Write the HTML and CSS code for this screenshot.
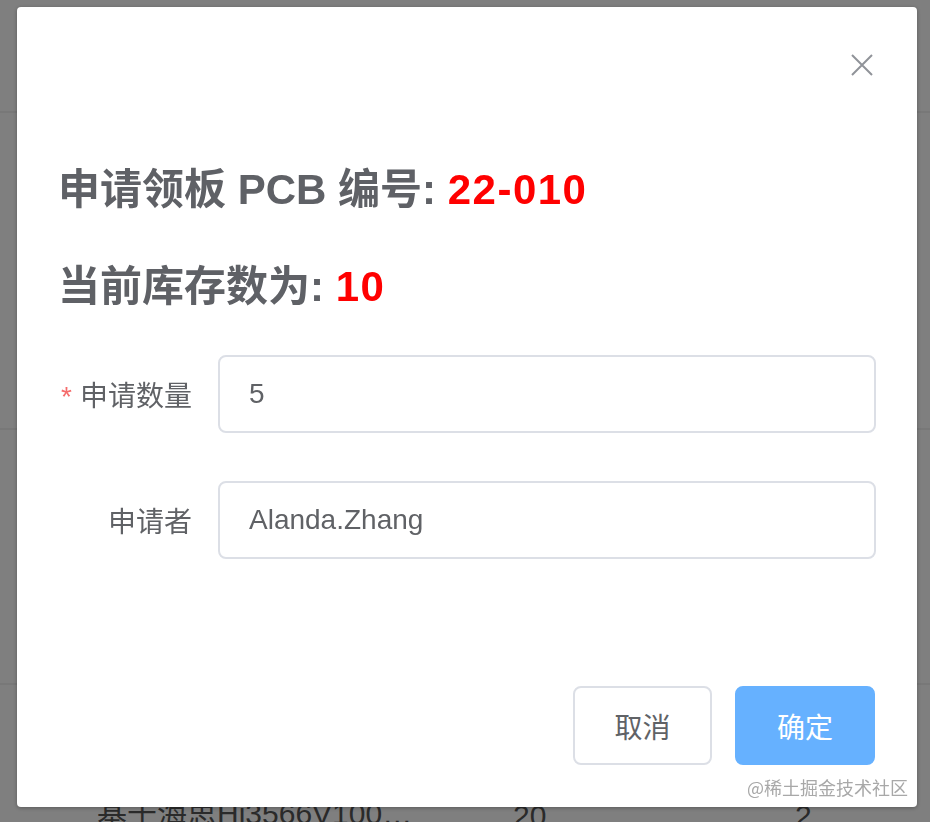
FILE: index.html
```html
<!DOCTYPE html>
<html lang="zh-CN">
<head>
    <meta charset="UTF-8">
    <meta name="viewport" content="width=device-width, initial-scale=1.0">
    <title>申请领板</title>
    <link rel="stylesheet" href="styles.css">
</head>
<body>

<div class="page">
    <div class="table-head"></div>
    <div class="table-row tall"></div>
    <div class="table-row"></div>
    <div class="table-row last">
        <span class="cell name">基于海思Hi3566V100…</span>
        <span class="cell num">20</span>
        <span class="cell num">2</span>
    </div>
</div>

<div class="mask"></div>

<div class="dialog">
    <div class="dialog-header">
        <button class="close" aria-label="关闭">
            <svg width="22" height="22" viewBox="0 0 22 22">
                <path d="M1 1 L21 21 M21 1 L1 21" stroke="#909399" stroke-width="2" fill="none"/>
            </svg>
        </button>
    </div>

    <div class="dialog-body">
        <h2 class="info">申请领板 PCB 编号: <span class="hl">22-010</span></h2>
        <h2 class="info">当前库存数为: <span class="hl">10</span></h2>

        <div class="form-item">
            <label class="form-label"><span class="req">*</span>申请数量</label>
            <input class="form-input" type="text" value="5">
        </div>
        <div class="form-item">
            <label class="form-label">申请者</label>
            <input class="form-input" type="text" value="Alanda.Zhang">
        </div>
    </div>

    <div class="dialog-footer">
        <button class="btn">取消</button>
        <button class="btn primary">确定</button>
    </div>
</div>

<div class="watermark">@稀土掘金技术社区</div>

</body>
</html>
```

FILE: styles.css
```css
body {
    margin: 0;
    font-family: "Liberation Sans", "Noto Sans CJK SC", sans-serif;
    background: #fff;
    color: #606266;
    overflow: hidden;
}
.page {
    width: 930px;
    height: 822px;
}
.table-head {
    height: 111px;
    border-bottom: 2px solid #f0f0f0;
}
.table-row {
    height: 253px;
    border-bottom: 2px solid #f0f0f0;
}
.table-row.tall {
    height: 315px;
}
.table-row.last {
    display: grid;
    grid-template-columns: 97px 416px 282px 1fr;
    align-items: end;
    height: auto;
    padding-top: 104px;
    border-bottom: none;
    font-size: 30px;
    color: #555;
}
.cell.name {
    grid-column: 2;
}
.mask {
    position: fixed;
    inset: 0;
    background: rgba(0, 0, 0, 0.5);
}
.dialog {
    position: fixed;
    left: 17px;
    top: 7px;
    width: 900px;
    height: 800px;
    background: #fff;
    border-radius: 4px;
    box-shadow: 0 1px 4px rgba(0, 0, 0, 0.3);
    display: flex;
    flex-direction: column;
    box-sizing: border-box;
}
.dialog-header {
    height: 110px;
    display: flex;
    justify-content: flex-end;
    align-items: flex-start;
    padding: 47px 44px 0 0;
    box-sizing: border-box;
}
.close {
    border: none;
    background: none;
    padding: 0;
    width: 22px;
    height: 22px;
    cursor: pointer;
}
.dialog-body {
    padding: 45px 41px 0 41px;
}
.info {
    margin: 0 0 41px;
    font-size: 42px;
    line-height: 56px;
    font-weight: bold;
    color: #5f6166;
}
.info + .info {
    margin-bottom: 40px;
}
.hl {
    color: #ff0000;
    letter-spacing: 1.5px;
}
.form-item {
    display: flex;
    align-items: center;
    margin-bottom: 48px;
}
.form-label {
    width: 160px;
    padding-right: 26px;
    box-sizing: border-box;
    text-align: right;
    font-size: 28px;
    color: #606266;
}
.req {
    color: #f56c6c;
    margin-right: 8px;
}
.form-input {
    flex: 1;
    height: 78px;
    box-sizing: border-box;
    border: 2px solid #dcdfe6;
    border-radius: 8px;
    padding: 0 29px;
    font-family: "Liberation Sans", "Noto Sans CJK SC", sans-serif;
    font-size: 28px;
    color: #606266;
    outline: none;
}
.dialog-footer {
    margin-top: auto;
    display: flex;
    justify-content: flex-end;
    gap: 23px;
    padding: 0 42px 42px 0;
}
.btn {
    height: 79px;
    width: 139px;
    border: 2px solid #dcdfe6;
    border-radius: 8px;
    background: #fff;
    font-family: "Liberation Sans", "Noto Sans CJK SC", sans-serif;
    font-size: 28px;
    color: #606266;
    cursor: pointer;
}
.btn.primary {
    width: 140px;
    background: #66b1ff;
    border-color: #66b1ff;
    color: #fff;
}
.watermark {
    position: fixed;
    right: 22px;
    bottom: 22px;
    font-size: 18px;
    color: #a8a8a8;
    text-shadow: 0 0 1px #fff;
    font-family: "Noto Sans CJK SC", sans-serif;
}
```
